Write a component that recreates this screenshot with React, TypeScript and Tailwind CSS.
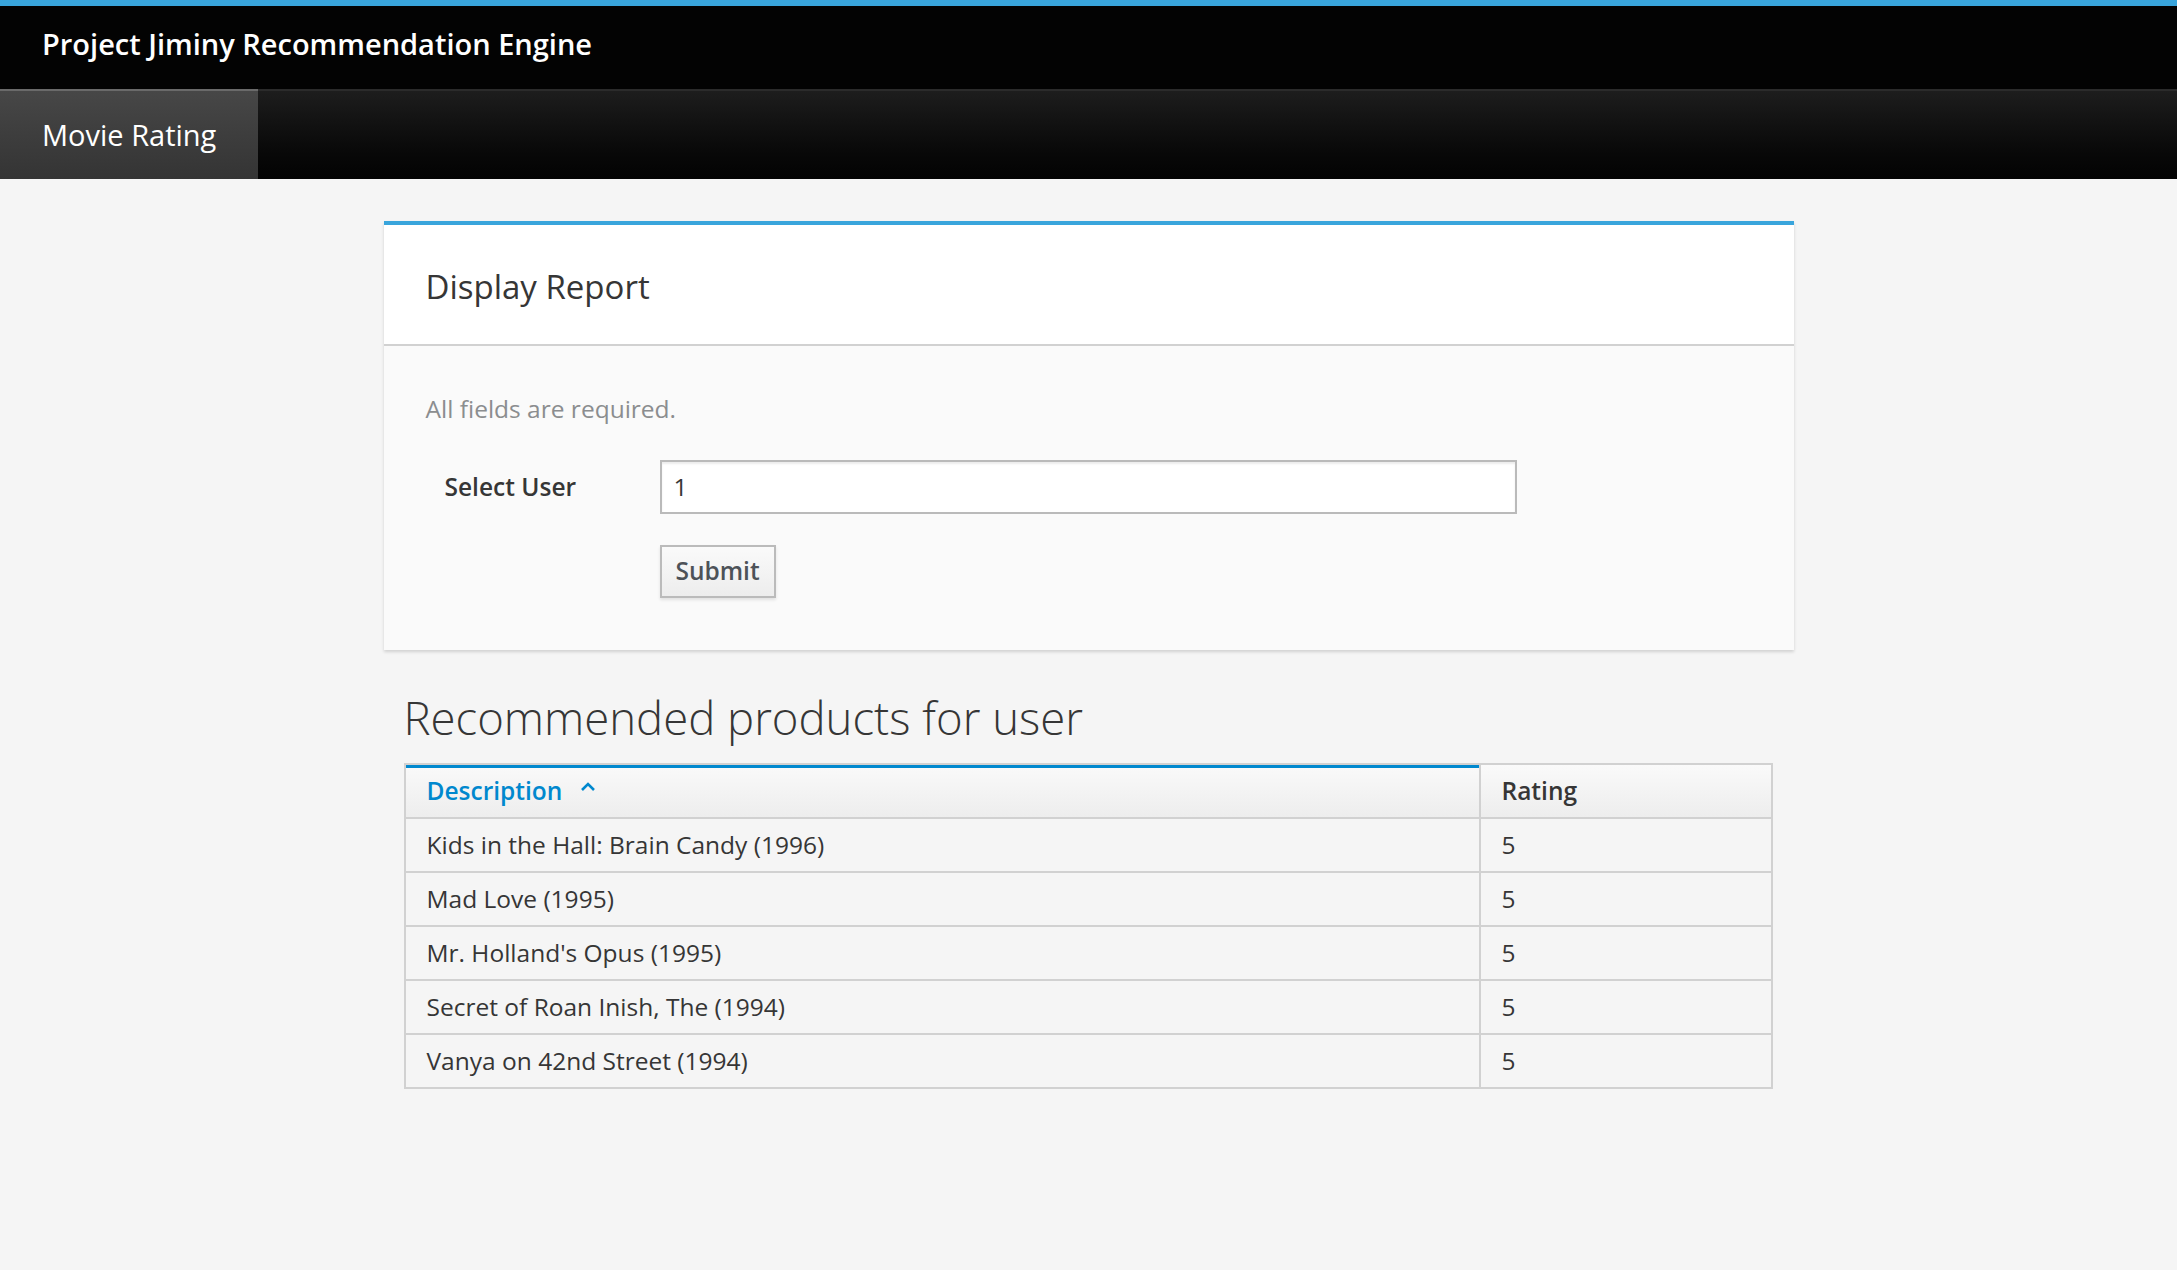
import React from "react";

const rows = [
  { d: "Kids in the Hall: Brain Candy (1996)", r: "5" },
  { d: "Mad Love (1995)", r: "5" },
  { d: "Mr. Holland's Opus (1995)", r: "5" },
  { d: "Secret of Roan Inish, The (1994)", r: "5" },
  { d: "Vanya on 42nd Street (1994)", r: "5" },
];

export default function App() {
  return (
    <div
      className="min-h-screen bg-[#f5f5f5] text-[#363636]"
      style={{ fontFamily: '"Open Sans", "Noto Sans", "Liberation Sans", sans-serif' }}
    >
      {/* top header */}
      <header className="h-[89px] border-t-[6px] border-[#39a5dc] bg-[#030303] flex items-center pl-[42px]">
        <span className="text-[29px] font-semibold text-white leading-none pb-[9px]">
          Project Jiminy Recommendation Engine
        </span>
      </header>

      {/* primary nav */}
      <nav className="h-[90px] flex bg-gradient-to-b from-[#1d1d1d] to-[#030303] border-t-2 border-[#2b2b2b]">
        <div className="-mt-[2px] w-[258px] h-[90px] flex items-center pl-[42px] bg-gradient-to-b from-[#474747] to-[#343434] border-t-2 border-[#6a6a6a]">
          <span className="text-[29px] text-white leading-none pb-[2px]">Movie Rating</span>
        </div>
      </nav>

      <main className="w-[1410px] mx-auto pt-[42px]">
        {/* card */}
        <section className="bg-white border-t-4 border-[#39a5dc] shadow-[0_2px_3px_rgba(3,3,3,0.15)]">
          <div className="h-[121px] border-b-2 border-[#d1d1d1] flex items-center px-[42px]">
            <h2 className="text-[33px] font-normal text-[#363636] leading-none pt-[3px]">Display Report</h2>
          </div>
          <div className="bg-[#fafafa] h-[304px] px-[42px] pt-[46px]">
            <p className="text-[24.5px] text-[#8b8d8f] leading-[34px]">All fields are required.</p>
            <div className="flex items-center mt-[34px]">
              <label className="w-[234px] pl-[19px] text-[24.5px] font-semibold text-[#363636] leading-none">
                Select User
              </label>
              <div className="w-[857px] h-[54px] bg-white border-2 border-[#bababa] shadow-[inset_0_2px_2px_rgba(3,3,3,0.075)] flex items-center px-[12px] text-[24.5px] text-[#363636]">
                1
              </div>
            </div>
            <div className="pl-[234px] mt-[31px]">
              <button className="w-[116px] h-[53px] bg-gradient-to-b from-[#fafafa] to-[#ededed] border-2 border-[#bbbbbb] shadow-[0_2px_3px_rgba(3,3,3,0.1)] text-[24.5px] font-semibold text-[#4d5258] leading-none">
                Submit
              </button>
            </div>
          </div>
        </section>

        {/* results */}
        <div className="px-[20px]">
          <h1 className="mt-[37px] text-[45.5px] font-light text-[#363636] leading-[60px]">
            Recommended products for user
          </h1>
          <table className="mt-[16px] w-[1369px] border-collapse border-2 border-[#d1d1d1] text-[24.5px]">
            <thead>
              <tr className="h-[54px] bg-gradient-to-b from-[#fafafa] to-[#ededed]">
                <th className="w-[1075px] border-2 border-[#d1d1d1] text-left font-semibold pl-[21px] pr-[20px] text-[#0088ce] shadow-[inset_0_3px_0_#0088ce]">
                  <span className="inline-flex items-center gap-[17px]">
                    Description
                    <svg width="18" height="12" viewBox="0 0 18 12" className="-mt-[8px]">
                      <path d="M3 9 L9 3 L15 9" fill="none" stroke="#0088ce" strokeWidth="2.6" />
                    </svg>
                  </span>
                </th>
                <th className="border-2 border-[#d1d1d1] text-left font-semibold pl-[21px] pr-[20px] text-[#363636]">
                  Rating
                </th>
              </tr>
            </thead>
            <tbody>
              {rows.map((row) => (
                <tr key={row.d} className="h-[54px]">
                  <td className="border-2 border-[#d1d1d1] pl-[21px] pr-[20px]">{row.d}</td>
                  <td className="border-2 border-[#d1d1d1] pl-[21px] pr-[20px]">{row.r}</td>
                </tr>
              ))}
            </tbody>
          </table>
        </div>
      </main>
    </div>
  );
}
